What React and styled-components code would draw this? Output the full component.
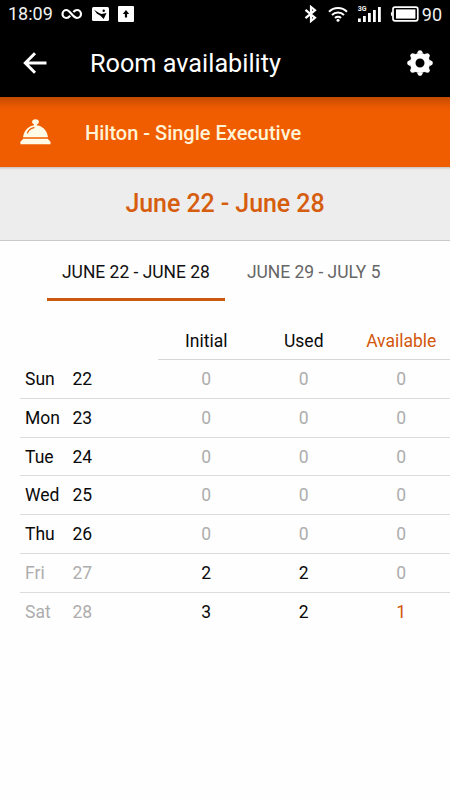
import React, { useState } from 'react'
import styled, { createGlobalStyle } from 'styled-components'

const days = [
  { day: 'Sun', date: 22, initial: 0, used: 0, available: 0 },
  { day: 'Mon', date: 23, initial: 0, used: 0, available: 0 },
  { day: 'Tue', date: 24, initial: 0, used: 0, available: 0 },
  { day: 'Wed', date: 25, initial: 0, used: 0, available: 0 },
  { day: 'Thu', date: 26, initial: 0, used: 0, available: 0 },
  { day: 'Fri', date: 27, initial: 2, used: 2, available: 0, weekend: true },
  { day: 'Sat', date: 28, initial: 3, used: 2, available: 1, weekend: true },
]

const tabs = ['June 22 - June 28', 'June 29 - July 5']

function StatusBar() {
  return (
    <Status>
      <Clock>18:09</Clock>
      <StatusLeft>
        <svg width="22" height="12" viewBox="0 0 22 12" fill="none" stroke="#fff" strokeWidth="2.2">
          <path d="M9.2 7.8C7.8 9.3 6.9 10 5.5 10a4 4 0 0 1 0-8C8.8 2 12.2 10 16 10a4 4 0 0 0 0-8c-1.4 0-2.5.8-3.6 2" />
        </svg>
        <svg width="17" height="14" viewBox="0 0 17 14">
          <rect width="17" height="14" rx="1.5" fill="#fff" />
          <path d="M2 2.8 7.5 6.3l2.2.6L14.5 6 11.7 12 8.5 8.8 5 6.8z" fill="#000" />
          <circle cx="11.7" cy="3.8" r="1.2" fill="#000" />
        </svg>
        <svg width="16" height="16" viewBox="0 0 16 16">
          <rect width="16" height="16" rx="1" fill="#fff" />
          <path d="M8 4 4.8 8h2.1v3.6h2.2V8h2.1z" fill="#000" />
        </svg>
      </StatusLeft>
      <StatusRight>
        <Bluetooth width="14" height="18" viewBox="0 0 14 18" fill="none" stroke="#fff" strokeWidth="2.2">
          <path d="m1.5 4.8 9.5 8L7 16V2l4 3.2-9.5 8" />
        </Bluetooth>
        <svg width="20" height="16" viewBox="0 0 20 16" fill="none" stroke="#fff" strokeWidth="2">
          <path d="M1 5.7a13 13 0 0 1 18 0M4 9a8.5 8.5 0 0 1 12 0M7 12a4.4 4.4 0 0 1 6 0" />
          <circle cx="10" cy="14.3" r="1.5" fill="#fff" stroke="none" />
        </svg>
        <Signal>
          <Network>3G</Network>
          <svg width="24" height="15" viewBox="0 0 24 15" fill="#fff">
            <path d="M0 11.5h2.8V15H0zM5 9h2.8v6H5zM10 6h2.8v9H10zM15 3h2.8v12H15zM20 0h2.8v15H20z" />
          </svg>
        </Signal>
        <svg width="29" height="16" viewBox="0 0 29 16">
          <path d="M2.5 5.2A2.5 3 0 0 0 2.5 10.8z" fill="#fff" />
          <rect x="3" y="1.2" width="24.8" height="13.6" rx="2" fill="none" stroke="#fff" strokeWidth="1.7" />
          <rect x="6" y="3.4" width="19.4" height="9.2" fill="#fff" />
        </svg>
        <Percent>90</Percent>
      </StatusRight>
    </Status>
  )
}

function BellIcon() {
  return (
    <svg width="32" height="26" viewBox="0 0 32 26">
      <g fill="#fffbe6">
        <ellipse cx="15.5" cy="2.8" rx="3.4" ry="2.6" />
        <path d="M13.9 4h3.2v3h-3.2z" />
        <path d="M3 18.2C4 11 9 6.2 15.5 6.2S27 11 28 18.2z" />
        <path d="M3.3 19.8h24.4l2.8 3v2.5H.4v-2.5z" />
      </g>
      <path d="M7.5 14C8.4 11.2 10.6 9.4 14 8.7" fill="none" stroke="#f05c00" strokeWidth="1.2" strokeLinecap="round" />
    </svg>
  )
}

function GearIcon() {
  return (
    <svg width="26" height="26" viewBox="-13 -13 26 26" fill="#fff">
      <circle r="7.3" fill="none" stroke="#fff" strokeWidth="5.6" />
      {[0, 45, 90, 135, 180, 225, 270, 315].map(angle => (
        <path key={angle} d="M-3.2-9.4-1.7-12.2Q0-13.4 1.7-12.2L3.2-9.4z" transform={`rotate(${angle})`} />
      ))}
    </svg>
  )
}

function App() {
  const [active, setActive] = useState(0)

  return (
    <Screen>
      <GlobalStyle />
      <StatusBar />
      <AppBar>
        <IconButton aria-label="Back">
          <svg width="24" height="22" viewBox="0 0 24 22" fill="none" stroke="#fff" strokeWidth="3">
            <path d="M23.5 11H3M12 1.3 2.3 11l9.7 9.7" />
          </svg>
        </IconButton>
        <Title>Room availability</Title>
        <IconButton aria-label="Settings">
          <GearIcon />
        </IconButton>
      </AppBar>
      <RoomBar>
        <BellIcon />
        <RoomName>Hilton - Single Executive</RoomName>
      </RoomBar>
      <Period>{tabs[active]}</Period>
      <Tabs>
        {tabs.map((tab, i) => (
          <Tab key={tab} $active={i === active} onClick={() => setActive(i)}>
            {tab}
          </Tab>
        ))}
      </Tabs>
      <TableHead>
        <HeadCell>Initial</HeadCell>
        <HeadCell>Used</HeadCell>
        <HeadCell $accent>Available</HeadCell>
      </TableHead>
      {days.map(row => (
        <Row key={row.date}>
          <Day $muted={row.weekend}>{row.day}</Day>
          <DateCell $muted={row.weekend}>{row.date}</DateCell>
          <Value $muted={!row.initial}>{row.initial}</Value>
          <Value $muted={!row.used}>{row.used}</Value>
          <Value $muted={!row.available} $accent={row.available > 0}>{row.available}</Value>
        </Row>
      ))}
    </Screen>
  )
}

const textColor = props => {
  if (props.$accent) return '#d2570b'
  return props.$muted ? '#adadad' : '#0a0a0a'
}

const GlobalStyle = createGlobalStyle`
  * {
    box-sizing: border-box;
  }
  body {
    margin: 0;
    background: #fff;
    font-family: Roboto, sans-serif;
  }
  svg {
    display: block;
    flex: none;
  }
`

const Screen = styled.div`
  width: 450px;
  height: 800px;
  overflow: hidden;
  background: #fefefe;
`

const Status = styled.div`
  display: flex;
  align-items: center;
  height: 28px;
  padding: 0 8px;
  background: #000;
  color: #f2f2f2;
`

const Clock = styled.span`
  width: 53px;
  font-size: 18px;
  line-height: 28px;
`

const StatusLeft = styled.div`
  display: flex;
  align-items: center;
  gap: 9px;
`

const StatusRight = styled.div`
  display: flex;
  align-items: center;
  margin-left: auto;
`

const Bluetooth = styled.svg`
  margin-right: 10px;
`

const Signal = styled.div`
  position: relative;
  margin: 0 8px 0 10px;
`

const Network = styled.span`
  position: absolute;
  top: -1px;
  left: 0;
  font-size: 7px;
  font-weight: 700;
  line-height: 7px;
`

const Percent = styled.span`
  margin-left: 3px;
  font-size: 18px;
`

const AppBar = styled.header`
  display: flex;
  align-items: center;
  height: 69px;
  padding: 0 17px 0 23px;
  background: #000;
  color: #fff;
`

const IconButton = styled.button`
  padding: 0;
  border: none;
  background: none;
`

const Title = styled.h1`
  flex: 1;
  margin: 2px 0 0 43px;
  font-size: 25.25px;
  font-weight: 400;
  line-height: 30px;
`

const RoomBar = styled.div`
  display: flex;
  align-items: center;
  height: 70px;
  padding-left: 20px;
  background: linear-gradient(#c04a00, #d85200 5px, #ea5900 10px, #f05c00 14px);
`

const RoomName = styled.span`
  margin: 2px 0 0 33px;
  color: #fff3d6;
  font-size: 20px;
  font-weight: 500;
`

const Period = styled.div`
  height: 74px;
  border-bottom: 1px solid #c9c9c9;
  background: linear-gradient(#c9c2bc, #e3e1df 2px, #ededed 3px);
  color: #d65d0e;
  font-size: 25px;
  font-weight: 500;
  letter-spacing: -0.08px;
  line-height: 73px;
  text-align: center;
`

const Tabs = styled.div`
  display: flex;
  gap: 7px;
  height: 60px;
  padding-left: 47px;
`

const Tab = styled.button`
  padding: 5px 15px 0;
  border: none;
  border-bottom: 3px solid ${props => (props.$active ? '#cc5810' : 'transparent')};
  background: none;
  color: ${props => (props.$active ? '#111' : '#666')};
  font: 17.45px Roboto, sans-serif;
  text-transform: uppercase;
`

const TableHead = styled.div`
  display: grid;
  grid-template-columns: repeat(3, 97.5px);
  align-items: center;
  height: 38px;
  margin: 21px 0 0 157.5px;
  border-bottom: 1px solid #d6d6d6;
`

const HeadCell = styled.span`
  color: ${textColor};
  font-size: 17.5px;
  text-align: center;
`

const Row = styled.div`
  display: grid;
  grid-template-columns: 47.5px 85px repeat(3, 97.5px);
  align-items: center;
  height: 38.75px;
  margin-left: 20px;
  padding: 0.6px 0 0 5px;
  border-bottom: 1px solid #dcdcdc;
  font-size: 17.5px;

  &:last-child {
    border-bottom: none;
  }
`

const Day = styled.span`
  color: ${textColor};
`

const DateCell = styled.span`
  color: ${textColor};
`

const Value = styled.span`
  color: ${textColor};
  text-align: center;
`

export default App
